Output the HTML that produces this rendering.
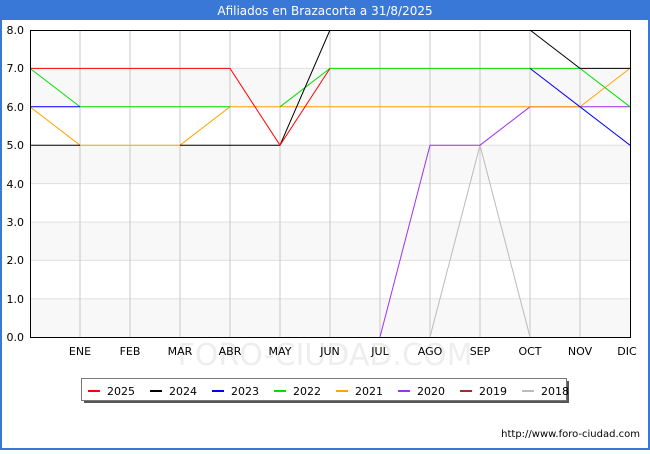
<!DOCTYPE html><html><head><style>
body{margin:0;width:650px;height:450px;overflow:hidden;font-family:"DejaVu Sans","Liberation Sans",sans-serif;}
</style></head><body>
<svg width="650" height="450" xmlns="http://www.w3.org/2000/svg" font-family="DejaVu Sans, Liberation Sans, sans-serif">
<rect x="0" y="0" width="650" height="450" fill="#3a78d8"/>
<rect x="2" y="20" width="646" height="428" fill="#fff"/>
<text x="325" y="15" fill="#fff" font-size="12" text-anchor="middle">Afiliados en Brazacorta a 31/8/2025</text>
<g fill="#f8f8f8"><rect x="30" y="68.4" width="600" height="38.4"/><rect x="30" y="145.2" width="600" height="38.4"/><rect x="30" y="222" width="600" height="38.4"/><rect x="30" y="298.8" width="600" height="38.4"/></g>
<g stroke="#e0e0e0" stroke-width="1"><path d="M30 68.4H630M30 106.8H630M30 145.2H630M30 183.6H630M30 222H630M30 260.4H630M30 298.8H630"/></g>
<g stroke="#c8c8c8" stroke-width="1"><path d="M80 30V337M130 30V337M180 30V337M230 30V337M280 30V337M330 30V337M380 30V337M430 30V337M480 30V337M530 30V337M580 30V337"/></g>
<text x="325" y="365" fill="#eeeeee" font-size="30" text-anchor="middle">FORO-CIUDAD.COM</text>
<g fill="none" stroke-width="1">
<polyline stroke="#bbbbbb" points="430,337 480,145.2 530,337"/>
<polyline stroke="#a030f0" points="380,337 430,145.2 480,145.2 530,106.8 580,106.8 630,106.8"/>
<polyline stroke="#ffa500" points="30,106.8 80,145.2 130,145.2 180,145.2 230,106.8 280,106.8 330,106.8 380,106.8 430,106.8 480,106.8 530,106.8 580,106.8 630,68.4"/>
<polyline stroke="#00e000" points="30,68.4 80,106.8 130,106.8 180,106.8 230,106.8"/>
<polyline stroke="#00e000" points="280,106.8 330,68.4 380,68.4 430,68.4 480,68.4 530,68.4 580,68.4 630,106.8"/>
<polyline stroke="#0000ff" points="30,106.8 80,106.8"/>
<polyline stroke="#0000ff" points="530,68.4 580,106.8 630,145.2"/>
<polyline stroke="#000" points="30,145.2 80,145.2"/>
<polyline stroke="#000" points="180,145.2 230,145.2 280,145.2 330,30"/>
<polyline stroke="#000" points="530,30 580,68.4 630,68.4"/>
<polyline stroke="#ff0000" points="30,68.4 80,68.4 130,68.4 180,68.4 230,68.4 280,145.2 330,68.4"/>
</g>
<rect x="30.5" y="30.5" width="600" height="307" fill="none" stroke="#000"/>
<g font-size="11" fill="#000" text-anchor="end">
<text x="24" y="34">8.0</text><text x="24" y="72">7.0</text><text x="24" y="111">6.0</text><text x="24" y="149">5.0</text><text x="24" y="188">4.0</text><text x="24" y="226">3.0</text><text x="24" y="264">2.0</text><text x="24" y="303">1.0</text><text x="24" y="341">0.0</text>
</g>
<g font-size="11" fill="#000" text-anchor="middle">
<text x="80" y="355">ENE</text><text x="130" y="355">FEB</text><text x="180" y="355">MAR</text><text x="230" y="355">ABR</text><text x="280" y="355">MAY</text><text x="330" y="355">JUN</text><text x="380" y="355">JUL</text><text x="430" y="355">AGO</text><text x="480" y="355">SEP</text><text x="530" y="355">OCT</text><text x="580" y="355">NOV</text><text x="627" y="355">DIC</text>
</g>
<rect x="84" y="381" width="485" height="22" fill="#555"/>
<rect x="81.5" y="378.5" width="485" height="22" fill="#fff" stroke="#777"/>
<g stroke-width="2">
<path d="M88 391H100" stroke="#ff0000"/><path d="M150 391H162" stroke="#000"/><path d="M212 391H224" stroke="#0000ff"/><path d="M274 391H286" stroke="#00e000"/><path d="M336 391H348" stroke="#ffa500"/><path d="M398 391H410" stroke="#a030f0"/><path d="M460 391H472" stroke="#a52a2a"/><path d="M522 391H534" stroke="#bbbbbb"/>
</g>
<g font-size="11" fill="#000">
<text x="107" y="395">2025</text><text x="169" y="395">2024</text><text x="231" y="395">2023</text><text x="293" y="395">2022</text><text x="355" y="395">2021</text><text x="417" y="395">2020</text><text x="479" y="395">2019</text><text x="541" y="395">2018</text>
</g>
<text x="640" y="437" font-size="10" fill="#000" text-anchor="end">http://www.foro-ciudad.com</text>
</svg>
</body></html>
